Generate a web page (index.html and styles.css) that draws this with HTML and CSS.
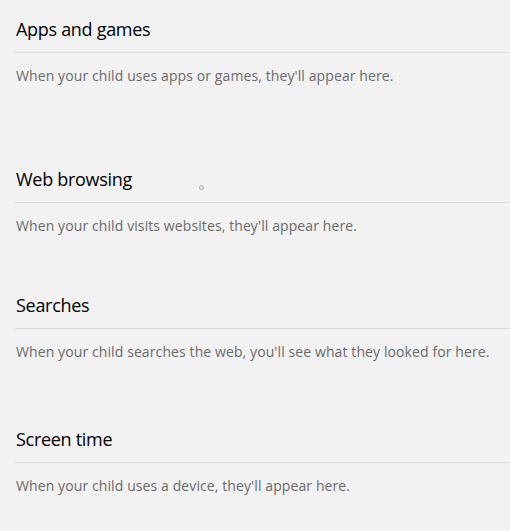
FILE: index.html
```html
<!DOCTYPE html>
<html lang="en">
<head>
<meta charset="utf-8">
<title>Activity</title>
<link rel="stylesheet" href="styles.css">
</head>
<body>
<main class="page">
  <section class="group group-apps">
    <h2 class="group-title">Apps and games</h2>
    <p class="group-desc">When your child uses apps or games, they'll appear here.</p>
  </section>
  <section class="group group-web">
    <h2 class="group-title">Web browsing</h2>
    <p class="group-desc">When your child visits websites, they'll appear here.</p>
    <span class="cursor-dot"></span>
  </section>
  <section class="group group-search">
    <h2 class="group-title">Searches</h2>
    <p class="group-desc">When your child searches the web, you'll see what they looked for here.</p>
  </section>
  <section class="group group-screen">
    <h2 class="group-title">Screen time</h2>
    <p class="group-desc">When your child uses a device, they'll appear here.</p>
  </section>
</main>
</body>
</html>
```
FILE: styles.css
```css
html, body {
  margin: 0;
  padding: 0;
  background: #f2f2f2;
}
body {
  font-family: "Open Sans", "Noto Sans", "Liberation Sans", sans-serif;
  overflow: hidden;
}
.page {
  padding-left: 15px;
  display: flex;
  flex-direction: column;
}
.group {
  position: relative;
  display: flex;
  flex-direction: column;
}
.group-title {
  margin: 0;
  padding: 1px 0 9px 1px;
  font-size: 18px;
  letter-spacing: -0.3px;
  font-weight: 400;
  line-height: 28px;
  height: 28px;
  color: #000;
  border-bottom: 1px solid #d9d9d9;
}
.group-desc {
  margin: 13px 0 0 0;
  padding-left: 1px;
  font-size: 14px;
  letter-spacing: 0.1px;
  line-height: 20px;
  color: #6a6a6a;
}
.group-apps { margin-top: 14px; }
.group-web { margin-top: 78px; }
.group-search { margin-top: 54px; }
.group-screen { margin-top: 62px; }
.cursor-dot {
  position: absolute;
  left: 184px;
  top: 21px;
  width: 3px;
  height: 3px;
  border: 1px solid #a0a0a8;
  border-radius: 50%;
}
```
